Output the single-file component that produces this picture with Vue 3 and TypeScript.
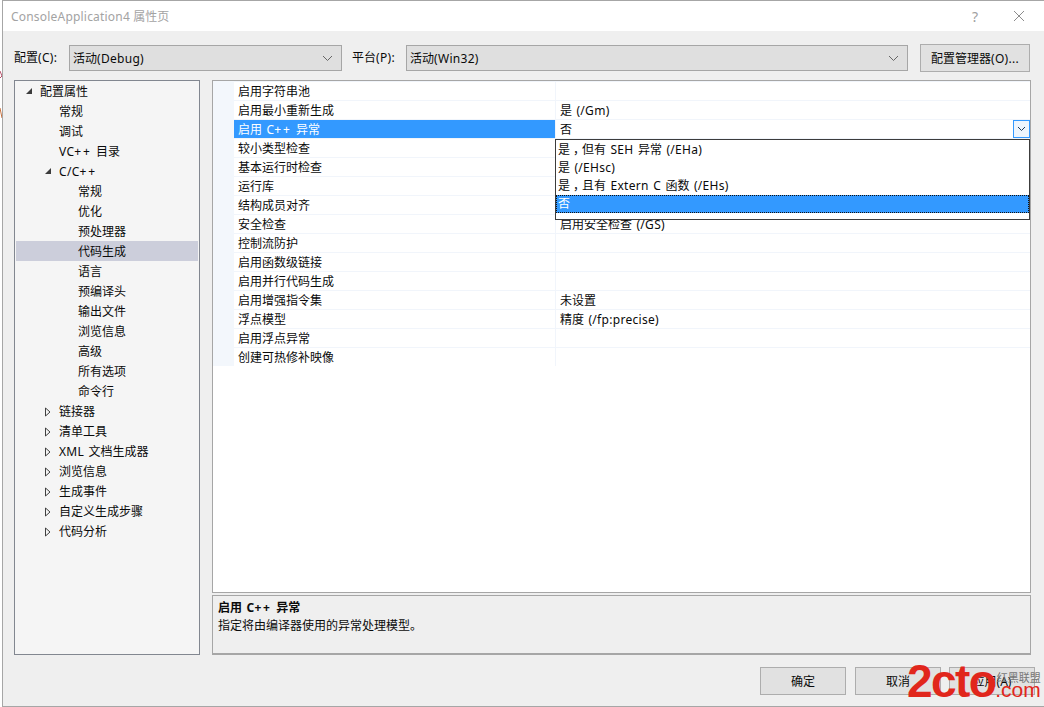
<script setup lang="ts">
interface TreeRow { label: string; level: number; arrow?: 'open' | 'closed'; selected?: boolean }
interface GridRow { name: string; value: string; active?: boolean }
interface Seg { t: string; c: string }

// Latin runs are set slightly wider than the CJK text around them, "+" wider still,
// and the full-width comma sits in the middle of its cell.
function segs(text: string): Seg[] {
  return text
    .split(/(\++|，|[\x20-\x2a\x2c-\x7e]+)/)
    .filter((t) => t.length > 0)
    .map((t) => ({
      t,
      c: t[0] === '+' ? 'plus' : t === '，' ? 'fw' : t.charCodeAt(0) < 127 ? 'lat' : '',
    }))
}

const tree: TreeRow[] = [
  { label: '配置属性', level: 0, arrow: 'open' },
  { label: '常规', level: 1 },
  { label: '调试', level: 1 },
  { label: 'VC++ 目录', level: 1 },
  { label: 'C/C++', level: 1, arrow: 'open' },
  { label: '常规', level: 2 },
  { label: '优化', level: 2 },
  { label: '预处理器', level: 2 },
  { label: '代码生成', level: 2, selected: true },
  { label: '语言', level: 2 },
  { label: '预编译头', level: 2 },
  { label: '输出文件', level: 2 },
  { label: '浏览信息', level: 2 },
  { label: '高级', level: 2 },
  { label: '所有选项', level: 2 },
  { label: '命令行', level: 2 },
  { label: '链接器', level: 1, arrow: 'closed' },
  { label: '清单工具', level: 1, arrow: 'closed' },
  { label: 'XML 文档生成器', level: 1, arrow: 'closed' },
  { label: '浏览信息', level: 1, arrow: 'closed' },
  { label: '生成事件', level: 1, arrow: 'closed' },
  { label: '自定义生成步骤', level: 1, arrow: 'closed' },
  { label: '代码分析', level: 1, arrow: 'closed' },
]

const grid: GridRow[] = [
  { name: '启用字符串池', value: '' },
  { name: '启用最小重新生成', value: '是 (/Gm)' },
  { name: '启用 C++ 异常', value: '否', active: true },
  { name: '较小类型检查', value: '' },
  { name: '基本运行时检查', value: '' },
  { name: '运行库', value: '' },
  { name: '结构成员对齐', value: '' },
  { name: '安全检查', value: '启用安全检查 (/GS)' },
  { name: '控制流防护', value: '' },
  { name: '启用函数级链接', value: '' },
  { name: '启用并行代码生成', value: '' },
  { name: '启用增强指令集', value: '未设置' },
  { name: '浮点模型', value: '精度 (/fp:precise)' },
  { name: '启用浮点异常', value: '' },
  { name: '创建可热修补映像', value: '' },
]

const options: string[] = ['是，但有 SEH 异常 (/EHa)', '是 (/EHsc)', '是，且有 Extern C 函数 (/EHs)', '否']
</script>

<template>
  <div class="page">
    <svg class="behind" width="2" height="130" viewBox="0 0 2 130">
      <path d="M0 71 L2 76 L0 78" stroke="#b8506a" fill="none" />
      <path d="M0 108 L2 118" stroke="#c8703c" fill="none" />
    </svg>
    <div class="dialog">
      <header class="title">
        <span class="title-text"><span v-for="(s, i) in segs('ConsoleApplication4 属性页')" :key="i" :class="s.c">{{ s.t }}</span></span>
        <span class="help">?</span>
        <svg class="close" width="12" height="12" viewBox="0 0 12 12">
          <path d="M1 1 L11 11 M11 1 L1 11" stroke="#8c8c8c" stroke-width="1" fill="none" />
        </svg>
      </header>

      <div class="toolbar">
        <label class="lbl"><span v-for="(s, i) in segs('配置(C):')" :key="i" :class="s.c">{{ s.t }}</span></label>
        <div class="combo combo-a">
          <span><span v-for="(s, i) in segs('活动(Debug)')" :key="i" :class="s.c">{{ s.t }}</span></span>
          <svg width="11" height="7" viewBox="0 0 11 7"><path d="M1 1 L5.5 5.5 L10 1" stroke="#666" fill="none" /></svg>
        </div>
        <label class="lbl lbl-b"><span v-for="(s, i) in segs('平台(P):')" :key="i" :class="s.c">{{ s.t }}</span></label>
        <div class="combo combo-b">
          <span><span v-for="(s, i) in segs('活动(Win32)')" :key="i" :class="s.c">{{ s.t }}</span></span>
          <svg width="11" height="7" viewBox="0 0 11 7"><path d="M1 1 L5.5 5.5 L10 1" stroke="#666" fill="none" /></svg>
        </div>
        <button class="btn manager"><span v-for="(s, i) in segs('配置管理器(O)...')" :key="i" :class="s.c">{{ s.t }}</span></button>
      </div>

      <div class="body">
        <nav class="tree">
          <div
            v-for="(row, i) in tree"
            :key="i"
            class="tree-row"
            :class="[`lvl-${row.level}`, { sel: row.selected }]"
          >
            <svg v-if="row.arrow === 'open'" class="arrow" width="8" height="8" viewBox="0 0 8 8">
              <path d="M7 1 V7 H1 Z" fill="#3c3c3c" />
            </svg>
            <svg v-else-if="row.arrow === 'closed'" class="arrow" width="8" height="10" viewBox="0 0 8 10">
              <path d="M1.5 1 L6 5 L1.5 9 Z" fill="none" stroke="#404040" />
            </svg>
            <span><span v-for="(s, j) in segs(row.label)" :key="j" :class="s.c">{{ s.t }}</span></span>
          </div>
        </nav>

        <div class="right">
          <section class="grid">
            <div v-for="(row, i) in grid" :key="i" class="grid-row">
              <div class="gutter"></div>
              <div class="name" :class="{ active: row.active }"><span v-for="(s, j) in segs(row.name)" :key="j" :class="s.c">{{ s.t }}</span></div>
              <div class="value">
                <span><span v-for="(s, j) in segs(row.value)" :key="j" :class="s.c">{{ s.t }}</span></span>
                <span v-if="row.active" class="drop-btn">
                  <svg width="9" height="6" viewBox="0 0 9 6"><path d="M1 1 L4.5 4.5 L8 1" stroke="#1e3a5a" fill="none" /></svg>
                </span>
              </div>
            </div>
            <ul class="dropdown">
              <li v-for="(o, i) in options" :key="i" :class="{ picked: i === 3 }"><span v-for="(s, j) in segs(o)" :key="j" :class="s.c">{{ s.t }}</span></li>
            </ul>
          </section>
          <section class="desc">
            <strong><span v-for="(s, j) in segs('启用 C++ 异常')" :key="j" :class="s.c">{{ s.t }}</span></strong>
            <p>指定将由编译器使用的异常处理模型。</p>
          </section>
        </div>
      </div>

      <footer class="footer">
        <button class="btn act">确定</button>
        <button class="btn act">取消</button>
        <button class="btn act apply">应用(A)</button>
      </footer>

      <div class="mark">
        <span class="mark-main">2cto</span>
        <span class="mark-side">
          <span class="mark-cn">红黑联盟</span>
          <span class="mark-com">.com</span>
        </span>
      </div>
    </div>
  </div>
</template>

<style>
html, body { margin: 0; background: #fff; }
</style>

<style scoped>
* { box-sizing: border-box; }
.page { position: relative; width: 1044px; height: 707px; overflow: hidden; }
.behind { position: absolute; left: 0; top: 0; }
.dialog {
  position: relative;
  width: 1043px;
  height: 707px;
  margin-left: 2px;
  border: 1px solid #a6a6a6;
  background: #efefef;
  font-family: "Noto Sans", "Noto Sans CJK SC", sans-serif;
  font-size: 12px;
  color: #0a0a0a;
}
.lat { letter-spacing: 0.3px; word-spacing: 1px; }
.plus { letter-spacing: 1.8px; }
.fw { padding-left: 3px; letter-spacing: -3px; }
.title {
  height: 30px;
  background: #fff;
  display: flex;
  align-items: center;
  padding-left: 8px;
  padding-right: 19px;
}
.title-text { flex: 1; color: #a3a3a3; }
.title-text .lat { letter-spacing: 0.2px; word-spacing: 0; }
.help { color: #a0a0a0; font-size: 14px; margin-right: 35px; }
.toolbar {
  height: 28px;
  margin-top: 13px;
  display: flex;
  align-items: flex-start;
  padding-left: 11px;
}
.lbl { width: 55px; margin-top: 1px; line-height: 26px; }
.lbl-b { width: 54px; margin-left: 10px; }
.combo {
  height: 26px;
  margin-top: 1px;
  background: #dfdfdf;
  border: 1px solid #a6a6a6;
  display: flex;
  align-items: center;
  justify-content: space-between;
  padding: 0 8px 0 3px;
}
.combo-a { width: 273px; }
.combo-b { width: 502px; }
.btn {
  font: inherit;
  color: #0a0a0a;
  background: #e1e1e1;
  border: 1px solid #adadad;
  padding: 0;
}
.manager { width: 110px; height: 28px; margin-left: 12px; }
.body {
  display: flex;
  margin-top: 8px;
  padding-left: 11px;
}
.tree {
  width: 186px;
  height: 575px;
  background: #f5f5f5;
  border: 1px solid #828790;
}
.tree-row {
  height: 20px;
  position: relative;
  display: flex;
  align-items: center;
  margin: 0 1px;
}
.tree-row.lvl-0 { padding-left: 24px; }
.tree-row.lvl-1 { padding-left: 43px; }
.tree-row.lvl-2 { padding-left: 62px; }
.tree-row.sel { background: #cccedb; }
.arrow { position: absolute; top: 6px; }
.lvl-0 .arrow { left: 9px; }
.lvl-1 .arrow { left: 28px; }
.right { width: 819px; margin-left: 12px; }
.grid {
  position: relative;
  height: 513px;
  background: #fff;
  border: 1px solid #a6a6a6;
}
.grid-row {
  display: flex;
  height: 19px;
  border-top: 1px solid #f1f5fb;
}
.gutter { width: 21px; background: #f3f7fc; margin-top: -1px; }
.name {
  width: 322px;
  padding-left: 4px;
  line-height: 20px;
  border-right: 1px solid #f1f5fb;
}
.name.active { background: #3399ff; color: #fff; }
.value {
  flex: 1;
  padding-left: 4px;
  line-height: 20px;
  display: flex;
  justify-content: space-between;
}
.drop-btn {
  width: 17px;
  height: 18px;
  border: 1px solid #3399ff;
  background: #eef5fd;
  display: flex;
  align-items: center;
  justify-content: center;
}
.dropdown {
  position: absolute;
  left: 342px;
  top: 58px;
  width: 475px;
  height: 81px;
  margin: 0;
  padding: 1px 0 0;
  list-style: none;
  background: #fff;
  border: 1px solid #3c3c3c;
}
.dropdown li {
  height: 18px;
  line-height: 18px;
  padding-left: 2px;
}
.dropdown li.picked {
  background: #3399ff;
  color: #fff;
  outline: 1px dotted #111;
  outline-offset: -1px;
}
.desc {
  height: 60px;
  margin-top: 2px;
  padding: 3px 5px;
  border: 1px solid #a6a6a6;
  border-bottom-width: 2px;
  line-height: 18px;
}
.desc strong { display: block; font-weight: 700; }
.desc p { margin: 0; }
.footer {
  display: flex;
  justify-content: flex-end;
  gap: 9px;
  margin-top: 12px;
  padding-right: 9px;
}
.act { width: 86px; height: 28px; }
.apply { margin-left: -1px; }
.mark {
  position: absolute;
  left: 904px;
  top: 662px;
  display: flex;
  align-items: flex-end;
  color: #e1261c;
  font-family: "Liberation Sans", sans-serif;
  pointer-events: none;
}
.mark-main { font-size: 46px; font-weight: 700; line-height: 36px; letter-spacing: -1.6px; }
.mark-side { display: flex; flex-direction: column; align-items: flex-end; margin-left: 0; }
.mark-cn { font-family: "Noto Sans CJK SC", sans-serif; font-size: 11px; line-height: 12px; margin-bottom: -2px; color: #777; }
.mark-com { font-size: 21px; line-height: 18px; }
</style>
